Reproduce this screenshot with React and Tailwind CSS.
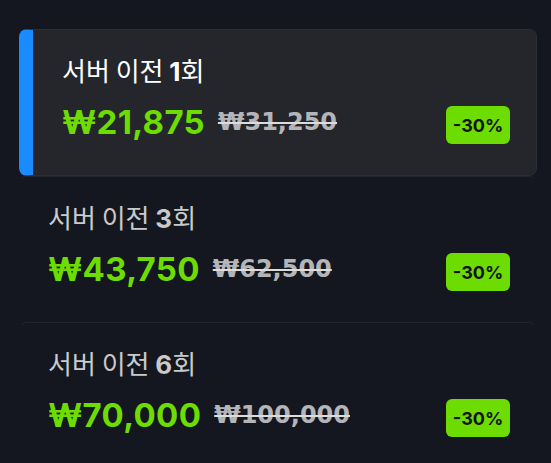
const plans = [
  { count: 1, price: '₩21,875', original: '₩31,250', active: true },
  { count: 3, price: '₩43,750', original: '₩62,500' },
  { count: 6, price: '₩70,000', original: '₩100,000' },
];

function PlanCard({ plan }) {
  return (
    <div
      className={`flex flex-col rounded-lg pr-[26px] pt-[24px] border ${
        plan.active
          ? 'bg-[#24262c] border-[#2b2e35] border-l-[14px] border-l-[#1a8cff] pl-[29px] pb-[31px]'
          : 'border-transparent border-t-[#21242b] pl-[28px] pb-[30px]'
      }`}
    >
      {/* 제목 */}
      <p
        className={`font-['Noto_Sans_CJK_KR','Noto_Sans',sans-serif] text-[26px] leading-[32px] ${
          plan.active ? 'text-white' : 'text-[#c9cacc]'
        }`}
      >
        서버 이전 <span className="font-['Inter',sans-serif] font-bold">{plan.count}</span>회
      </p>

      {/* 가격 */}
      <div className="mt-[12px] flex items-end h-[44px]">
        <span className="font-['Inter',sans-serif] text-[33px] leading-[44px] font-bold text-[#6ddc00] tracking-[0.3px]">
          {plan.price}
        </span>
        <span className="ml-[13px] font-['DejaVu_Sans',sans-serif] text-[24px] leading-[44px] font-bold text-[#b4b5b8] line-through decoration-[2px] decoration-[#dcdcdc]">
          {plan.original}
        </span>
        <span className="ml-auto rounded-md bg-[#6ddc00] h-[38px] w-[64px] flex items-center justify-center font-['Inter',sans-serif] text-[18px] font-bold text-[#111317]">
          -30%
        </span>
      </div>
    </div>
  );
}

export default function App() {
  return (
    <div className="w-[551px] h-[463px] overflow-hidden bg-[#14171f] pt-[29px] pl-[19px] pr-[14px]">
      <div className="flex flex-col">
        {plans.map((p) => (
          <PlanCard key={p.count} plan={p} />
        ))}
      </div>
    </div>
  );
}
